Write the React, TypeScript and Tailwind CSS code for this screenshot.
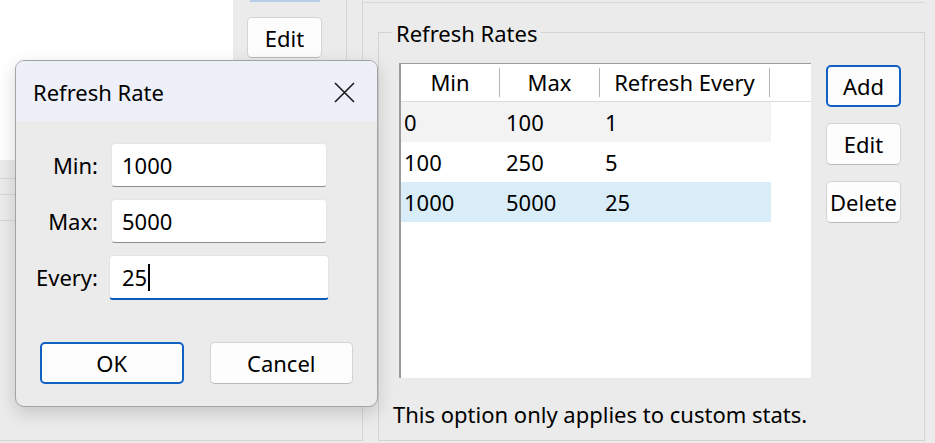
type BtnProps = {
  label: string;
  primary?: boolean;
  className?: string;
};

const WinButton = ({ label, primary, className = "" }: BtnProps) => {
  return (
    <button
      className={`flex items-center justify-center rounded-[5px] bg-[#fdfdfd] text-[22px] leading-none text-black ${
        primary
          ? "border-2 border-[#0f62c4]"
          : "border border-[#d3d3d3] border-b-[#b9b9b9]"
      } ${className}`}
    >
      {label}
    </button>
  );
};

type FieldProps = {
  label: string;
  value: string;
  focused?: boolean;
};

const Field = ({ label, value, focused }: FieldProps) => {
  return (
    <div className="flex items-center">
      <span className="w-[82px] text-right text-[22px] text-black">{label}</span>
      {focused ? (
        <div className="ml-[11px] flex h-[45px] w-[220px] items-center rounded-[4px] border border-[#e3e3e3] border-b-2 border-b-[#0a5cbc] bg-white pl-[12px] text-[22px] text-black">
          {value}
          <span className="ml-[1px] h-[27px] w-[2px] bg-black" />
        </div>
      ) : (
        <div className="ml-[13px] flex h-[44px] w-[216px] items-center rounded-[4px] border border-[#e6e6e6] border-b-[#8c8c8c] bg-white pl-[10px] text-[22px] text-black">
          {value}
        </div>
      )}
    </div>
  );
};

const rows = [
  { min: "0", max: "100", every: "1", bg: "bg-[#f3f3f3]" },
  { min: "100", max: "250", every: "5", bg: "bg-white" },
  { min: "1000", max: "5000", every: "25", bg: "bg-[#d9edf8]" },
];

const RefreshDialog = () => {
  return (
    <div className="absolute left-[15px] top-[60px] flex h-[347px] w-[363px] flex-col overflow-hidden rounded-[9px] border border-[#a3a3a3] bg-[#ebebeb] shadow-[0_6px_18px_rgba(0,0,0,0.16)]">
      <div className="flex h-[60px] shrink-0 items-center justify-between bg-[#edf0f8] pl-[17px] pr-[22px] pt-[3px]">
        <span className="text-[22px] text-black">Refresh Rate</span>
        <svg width="21" height="21" viewBox="0 0 21 21" fill="none">
          <path d="M1 1L20 20M20 1L1 20" stroke="#1a1a1a" strokeWidth="1.6" />
        </svg>
      </div>
      <div className="flex flex-col gap-[12px] pt-[22px]">
        <Field label="Min:" value="1000" />
        <Field label="Max:" value="5000" />
        <Field label="Every:" value="25" focused />
      </div>
      <div className="mt-auto mb-[22px] flex gap-[26px] px-[24px]">
        <WinButton label="OK" primary className="h-[42px] w-[145px]" />
        <WinButton label="Cancel" className="h-[42px] w-[145px]" />
      </div>
    </div>
  );
};

const ListView = () => {
  return (
    <div className="flex h-[315px] w-[412px] flex-col border-l-2 border-t border-[#9b9b9b] bg-white">
      <div className="flex h-[38px] shrink-0 items-center border-b border-[#dcdcdc] text-[22px] text-black">
        <div className="flex w-[99px] items-center">
          <span className="flex-1 text-center">Min</span>
          <span className="h-[29px] w-px bg-[#b4b4b4]" />
        </div>
        <div className="flex w-[100px] items-center">
          <span className="flex-1 text-center">Max</span>
          <span className="h-[29px] w-px bg-[#b4b4b4]" />
        </div>
        <div className="flex w-[170px] items-center">
          <span className="flex-1 text-center">Refresh Every</span>
          <span className="h-[29px] w-px bg-[#b4b4b4]" />
        </div>
      </div>
      {rows.map((r) => (
        <div key={r.min} className={`flex h-[40px] w-[370px] items-center text-[22px] text-black ${r.bg}`}>
          <span className="w-[99px] pl-[3px]">{r.min}</span>
          <span className="w-[100px] pl-[6px]">{r.max}</span>
          <span className="pl-[5px]">{r.every}</span>
        </div>
      ))}
    </div>
  );
};

export default function App() {
  return (
    <div className="relative flex h-[443px] w-[935px] overflow-hidden bg-[#ebebeb] font-['Noto_Sans','Open_Sans',sans-serif]">
      {/* left background panel */}
      <div className="flex h-[441px] w-[363px] shrink-0 flex-col border-b border-r border-[#d6d6d6]">
        <div className="flex h-[160px] shrink-0">
          <div className="w-[233px] bg-white" />
          <div className="flex w-[114px] flex-col border-r border-[#d6d6d6]">
            <div className="ml-[17px] h-[2px] w-[70px] bg-[#b7cde8]" />
            <WinButton label="Edit" className="ml-[14px] mt-[15px] h-[41px] w-[75px]" />
          </div>
        </div>
        <div className="h-[19px] w-[20px] border-b border-[#d7d7d7]" />
        <div className="h-[16px] w-[20px] border-b border-[#d7d7d7]" />
        <div className="h-[26px] w-[20px] border-b border-[#d7d7d7]" />
      </div>

      {/* right background panel */}
      <div className="flex flex-1 flex-col">
        <div className="mr-[10px] h-[3px] shrink-0 border-b border-[#d8d8d8]" />
        <div className="relative ml-[15px] mt-[29px] flex h-[409px] w-[547px] flex-col border border-[#d3d3d3] pl-[20px] pt-[30px]">
          <span className="absolute -top-[16px] left-[13px] bg-[#ebebeb] px-[4px] text-[22px] text-black">
            Refresh Rates
          </span>
          <div className="flex">
            <ListView />
            <div className="ml-[15px] flex flex-col gap-[16px] pt-[2px]">
              <WinButton label="Add" primary className="h-[42px] w-[75px]" />
              <WinButton label="Edit" className="h-[42px] w-[75px]" />
              <WinButton label="Delete" className="h-[42px] w-[75px]" />
            </div>
          </div>
          <p className="-ml-[6px] mt-[20px] text-[22px] text-black">This option only applies to custom stats.</p>
        </div>
      </div>

      <RefreshDialog />
    </div>
  );
}
